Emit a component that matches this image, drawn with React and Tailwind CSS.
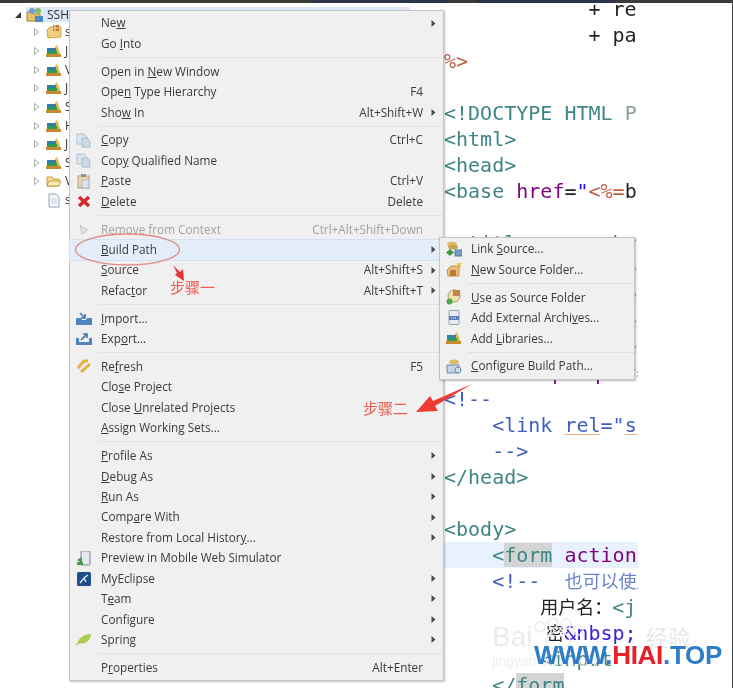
import React from "react";

const SANS = "font-['Open_Sans','Noto_Sans',sans-serif]";
const MONO = "font-['DejaVu_Sans_Mono','Noto_Sans_CJK_SC',monospace]";

// icons
const Lib = () => (
  <svg width="16" height="14" viewBox="0 0 16 14">
    <path d="M9 3 L11 1 L15 12 L9 12 Z" fill="#e8b73a" />
    <rect x="1" y="4" width="9" height="3" fill="#2f7fa8" />
    <rect x="1" y="7" width="10" height="3" fill="#2f9a55" />
    <rect x="0" y="10" width="15" height="3" fill="#c98a2e" />
  </svg>
);
const PkgFolder = () => (
  <svg width="16" height="14" viewBox="0 0 16 14">
    <path d="M1 5 L4 2 L15 2 L15 12 L2 13 Z" fill="#f2cf7c" stroke="#d3a24a" />
    <rect x="7" y="0" width="6" height="6" fill="#b97b3e" />
    <path d="M9 0 V6 M7 3 H13" stroke="#f2dfb4" />
  </svg>
);
const Folder = () => (
  <svg width="16" height="14" viewBox="0 0 16 14">
    <path d="M1 3 L6 3 L7 5 L13 5 L13 12 L1 12 Z" fill="#f7dc95" stroke="#c99a3d" />
    <path d="M3 7 L15 7 L13 12 L1 12 Z" fill="#fbe9b8" stroke="#c99a3d" />
  </svg>
);
const FileIcon = () => (
  <svg width="12" height="15" viewBox="0 0 12 15">
    <path d="M1 1 H8 L11 4 V14 H1 Z" fill="#f4f7fb" stroke="#98a6b8" />
    <path d="M3 6 H9 M3 8 H9 M3 10 H9" stroke="#c3cfdd" />
  </svg>
);
const Project = () => (
  <svg width="18" height="16" viewBox="0 0 18 16">
    <path d="M1 5 L7 5 L8 7 L14 7 L14 14 L1 14 Z" fill="#e8c36a" stroke="#b28a38" />
    <circle cx="6" cy="4" r="3" fill="#6f9fd8" />
    <circle cx="12" cy="4" r="3" fill="#7fbf6a" />
    <rect x="9" y="9" width="8" height="6" fill="#4f87c7" />
  </svg>
);
const CopyIcon = () => (
  <svg width="16" height="15" viewBox="0 0 16 15">
    <path d="M1 1 H8 L11 4 V11 H1 Z" fill="#dbe5ef" stroke="#b3c3d6" />
    <path d="M6 5 H11 L14 8 V14 H6 Z" fill="#cdd9e6" stroke="#a7bad0" />
  </svg>
);
const PasteIcon = () => (
  <svg width="14" height="15" viewBox="0 0 14 15">
    <rect x="1" y="2" width="11" height="12" fill="#e8d5a8" stroke="#b5a47c" />
    <rect x="4" y="0" width="5" height="3" fill="#8a97a8" />
    <rect x="5" y="6" width="7" height="8" fill="#dbe5ef" stroke="#a7bad0" />
  </svg>
);
const DeleteIcon = () => (
  <svg width="14" height="13" viewBox="0 0 14 13">
    <path d="M2 2 L12 11 M12 2 L2 11" stroke="#d9272e" strokeWidth="3.4" />
  </svg>
);
const RemoveIcon = () => (
  <svg width="14" height="13" viewBox="0 0 14 13">
    <path d="M3 2 L11 7 L5 11 Z" fill="#dfdfdf" stroke="#c8c8c8" />
  </svg>
);
const ImportIcon = () => (
  <svg width="16" height="13" viewBox="0 0 16 13">
    <path d="M0 6 H5 L6 8 H10 L11 6 H16 V13 H0 Z" fill="#4f87c0" />
    <path d="M4 1 L9 6 M9 2 V6 H5" stroke="#3d76b3" strokeWidth="1.6" fill="none" />
  </svg>
);
const ExportIcon = () => (
  <svg width="16" height="13" viewBox="0 0 16 13">
    <path d="M0 6 H3 V10 H13 V6 H16 V13 H0 Z" fill="#4f87c0" />
    <path d="M5 8 L11 2 M7 2 H11 V6" stroke="#3d76b3" strokeWidth="1.6" fill="none" />
  </svg>
);
const RefreshIcon = () => (
  <svg width="16" height="15" viewBox="0 0 16 15">
    <path d="M2 9 L8 2 L12 2 M5 13 L14 5" stroke="#e3b23c" strokeWidth="3" fill="none" />
  </svg>
);
const PreviewIcon = () => (
  <svg width="14" height="15" viewBox="0 0 14 15">
    <rect x="4" y="0" width="9" height="14" rx="1" fill="#e3e8ec" stroke="#7b8a96" />
    <path d="M0 9 L5 6 V12 Z" fill="#3d9b4a" />
    <rect x="0" y="11" width="6" height="3" fill="#3d9b4a" />
  </svg>
);
const MyEclipseIcon = () => (
  <svg width="14" height="14" viewBox="0 0 14 14">
    <rect width="14" height="14" rx="1.5" fill="#1f4e8c" />
    <path d="M3 11 L7 6 L11 3 M7 6 L9 10" stroke="#e6eef8" strokeWidth="1.3" fill="none" />
  </svg>
);
const SpringIcon = () => (
  <svg width="16" height="13" viewBox="0 0 16 13">
    <path d="M1 12 C2 5 8 1 15 1 C15 7 9 12 3 10 Z" fill="#a6cf4f" />
    <path d="M0 12 L6 8" stroke="#d9a441" />
  </svg>
);
const LinkSourceIcon = () => (
  <svg width="16" height="16" viewBox="0 0 16 16">
    <ellipse cx="6" cy="3" rx="5" ry="2.5" fill="#dcbc6c" />
    <ellipse cx="7" cy="6" rx="5" ry="2.5" fill="#c9a455" />
    <path d="M4 8 L8 11.5 L4 15 L0 11.5 Z" fill="#3f9a4a" />
    <rect x="9" y="9" width="7" height="6" fill="#7d9cc0" stroke="#5b7fa8" />
  </svg>
);
const NewSourceIcon = () => (
  <svg width="16" height="15" viewBox="0 0 16 15">
    <path d="M1 8 L5 4 H13 V14 H2 Z" fill="#e8be7a" stroke="#c8924a" />
    <rect x="4" y="8" width="6" height="6" fill="#b97b3e" />
    <path d="M11 1 L15 5 M15 1 L11 5" stroke="#e8c23f" strokeWidth="1.6" />
  </svg>
);
const UseSourceIcon = () => (
  <svg width="16" height="16" viewBox="0 0 16 16">
    <circle cx="8" cy="7" r="6" fill="#f0e0b0" stroke="#a8a05a" />
    <rect x="7" y="1" width="7" height="6" fill="#c2854a" />
    <circle cx="3.5" cy="12.5" r="3" fill="#4fa84a" />
  </svg>
);
const ArchiveIcon = () => (
  <svg width="12" height="15" viewBox="0 0 12 15">
    <rect x="1" y="0.5" width="10" height="14" rx="1" fill="#e6ecf2" stroke="#8fa3b8" />
    <rect x="1" y="6" width="10" height="4" fill="#5b7fb0" />
    <path d="M3 8 H9" stroke="#fff" strokeDasharray="1 1" />
  </svg>
);
const ConfigIcon = () => (
  <svg width="16" height="15" viewBox="0 0 16 15">
    <ellipse cx="8" cy="3" rx="5" ry="2.5" fill="#dcbc6c" />
    <path d="M1 6 H13 V14 H1 Z" fill="#c3d4e6" stroke="#6f8db0" />
    <circle cx="12" cy="11" r="3" fill="#cdd9e6" stroke="#6f8db0" />
  </svg>
);

const SubArrow = () => (
  <svg width="5" height="7" viewBox="0 0 5 7" className="opacity-80">
    <path d="M0.5 0 L4.5 3.5 L0.5 7 Z" fill="#222" />
  </svg>
);

// "&" marks the mnemonic letter
function Label({ text }) {
  const i = text.indexOf("&");
  if (i < 0) return <span>{text}</span>;
  return (
    <span>
      {text.slice(0, i)}
      <u className="underline-offset-1">{text[i + 1]}</u>
      {text.slice(i + 2)}
    </span>
  );
}

const menu = [
  { t: "Ne&w", sub: true },
  { t: "Go &Into" },
  "sep",
  { t: "Open in &New Window" },
  { t: "Ope&n Type Hierarchy", k: "F4" },
  { t: "Sho&w In", k: "Alt+Shift+W", sub: true },
  "sep",
  { t: "&Copy", k: "Ctrl+C", icon: <CopyIcon /> },
  { t: "Cop&y Qualified Name", icon: <CopyIcon /> },
  { t: "&Paste", k: "Ctrl+V", icon: <PasteIcon /> },
  { t: "&Delete", k: "Delete", icon: <DeleteIcon /> },
  "sep",
  { t: "Remove from Context", k: "Ctrl+Alt+Shift+Down", icon: <RemoveIcon />, off: true },
  { t: "&Build Path", sub: true, active: true },
  { t: "&Source", k: "Alt+Shift+S", sub: true },
  { t: "Refac&tor", k: "Alt+Shift+T", sub: true },
  "sep",
  { t: "&Import...", icon: <ImportIcon /> },
  { t: "Exp&ort...", icon: <ExportIcon /> },
  "sep",
  { t: "Re&fresh", k: "F5", icon: <RefreshIcon /> },
  { t: "Clo&se Project" },
  { t: "Close &Unrelated Projects" },
  { t: "&Assign Working Sets..." },
  "sep",
  { t: "&Profile As", sub: true },
  { t: "&Debug As", sub: true },
  { t: "&Run As", sub: true },
  { t: "Comp&are With", sub: true },
  { t: "Restore from Local Histor&y...", sub: true },
  { t: "Preview in Mobile Web Simulator", icon: <PreviewIcon /> },
  { t: "MyEclipse", icon: <MyEclipseIcon />, sub: true },
  { t: "T&eam", sub: true },
  { t: "Confi&gure", sub: true },
  { t: "Spring", icon: <SpringIcon />, sub: true },
  "sep",
  { t: "P&roperties", k: "Alt+Enter" },
];

const subMenu = [
  { t: "Link &Source...", icon: <LinkSourceIcon /> },
  { t: "&New Source Folder...", icon: <NewSourceIcon /> },
  "sep",
  { t: "&Use as Source Folder", icon: <UseSourceIcon /> },
  { t: "Add External Archi&ves...", icon: <ArchiveIcon /> },
  { t: "Add &Libraries...", icon: <Lib /> },
  "sep",
  { t: "&Configure Build Path...", icon: <ConfigIcon /> },
];

function Rows({ items }) {
  return items.map((it, i) =>
    it === "sep" ? (
      <div key={i} className="h-[7.4px] flex items-center ml-[28px]">
        <div className="h-px w-full bg-[#e2e2e2]" />
      </div>
    ) : (
      <div
        key={i}
        className={`h-[20.45px] flex items-center ${
          it.active ? "bg-[#e4eefa] outline outline-[#d3e2f3]" : ""
        } ${it.off ? "text-[#a2a2a2]" : "text-[#3a3a3a]"}`}
      >
        <div className="w-[28px] shrink-0 flex items-center justify-center">{it.icon}</div>
        <div className="flex-1 pl-[3px] whitespace-nowrap">
          <Label text={it.t} />
        </div>
        {it.k && <div className="whitespace-nowrap text-right">{it.k}</div>}
        <div className="w-[20px] shrink-0 flex items-center justify-center">
          {it.sub && <SubArrow />}
        </div>
      </div>
    )
  );
}

const treeRows = [
  [<PkgFolder />, "s", true],
  [<Lib />, "J", true],
  [<Lib />, "V", true],
  [<Lib />, "J", true],
  [<Lib />, "S", true],
  [<Lib />, "H", true],
  [<Lib />, "J", true],
  [<Lib />, "S", true],
  [<Folder />, "V", true],
  [<FileIcon />, "s", false],
];

const Tag = ({ children }) => <span className="text-[#3f8585]">{children}</span>;
const Attr = ({ children }) => <span className="text-[#7f007f]">{children}</span>;
const Cmt = ({ children }) => <span className="text-[#3f5fbf]">{children}</span>;
const Wavy = ({ children }) => (
  <span className="underline decoration-1 decoration-[#e8b080] underline-offset-2">{children}</span>
);
const Cjk = ({ children }) => <span className="text-[18px]">{children}</span>;

const Line = ({ children, className = "" }) => (
  <div className={`h-[26px] leading-[26px] whitespace-pre ${className}`}>{children || " "}</div>
);

export default function App() {
  return (
    <div className={`relative w-[733px] h-[688px] bg-white overflow-hidden border-r border-[#444] blur-[0.45px] ${SANS}`}>
      {/* top strip */}
      <div className="relative z-10 h-[3px] bg-[#3b3b3b] flex">
        <div className="ml-[313px] w-[137px] h-[3px] bg-[#2c3547] rounded-b" />
        <div className="ml-[25px] w-[140px] h-[3px] bg-[#2c3547] rounded-b" />
      </div>

      <div className="flex h-[685px]">
        {/* project tree */}
        <div className="w-[444px] shrink-0 pt-[4px] text-[12px] text-[#333]">
          <div className="flex items-center h-[15px] ml-[15px]">
            <svg width="6" height="6" viewBox="0 0 6 6"><path d="M6 0 V6 H0 Z" fill="#333" /></svg>
            <div className="ml-[5px] w-[384px] h-[15px] flex items-center bg-[#dde9f8]">
              <Project />
              <span className="ml-[3px]">SSH</span>
            </div>
          </div>
          <div className="pt-[1px]">
            {treeRows.map(([icon, letter, arrow], i) => (
              <div key={i} className="h-[18.65px] flex items-center pl-[34px]">
                <div className="w-[11px]">
                  {arrow && (
                    <svg width="6" height="8" viewBox="0 0 6 8"><path d="M0.5 0.5 L5 4 L0.5 7.5 Z" fill="#fff" stroke="#a9a9a9" /></svg>
                  )}
                </div>
                <div className="w-[17px] flex justify-center">{icon}</div>
                <span className="ml-[3px]">{letter}</span>
              </div>
            ))}
          </div>
        </div>

        {/* source editor */}
        <div className={`w-[194px] h-[685px] overflow-hidden text-[20px] text-[#222] ${MONO}`}>
          <div className="-mt-[7px]">
            <Line>{"            + re"}</Line>
            <Line>{"            + pa"}</Line>
            <Line className="text-[#bf5f3f]">%&gt;</Line>
            <Line />
            <Line><Tag>&lt;!DOCTYPE HTML</Tag> <span className="text-[#8a9a9a]">P</span></Line>
            <Line><Tag>&lt;html&gt;</Tag></Line>
            <Line><Tag>&lt;head&gt;</Tag></Line>
            <Line><Tag>&lt;base</Tag> <Attr>href</Attr>=<span className="text-[#2a00ff]">"</span><span className="text-[#bf5f3f]">&lt;%=</span>b</Line>
            <Line />
            <Line><Tag>{"  title       href"}</Tag></Line>
            <Line>{"    "}<Tag>&lt;meta</Tag> <Attr>http-equiv="pragma"</Attr></Line>
            <Line>{"    "}<Tag>&lt;meta</Tag> <Attr>http-equiv="cache"</Attr></Line>
            <Line>{"    "}<Tag>&lt;meta</Tag> <Attr>http-equiv="expires"</Attr></Line>
            <Line>{"    "}<Tag>&lt;meta</Tag> <Attr>http-equiv="keywords"</Attr></Line>
            <Line><Attr>&lt;meta http-equiv=</Attr></Line>
            <Line><Cmt>&lt;!--</Cmt></Line>
            <Line>{"    "}<Cmt>&lt;link <Wavy>rel</Wavy>="<Wavy>s</Wavy></Cmt></Line>
            <Line>{"    "}<Cmt>--&gt;</Cmt></Line>
            <Line><Tag>&lt;/head&gt;</Tag></Line>
            <Line />
            <Line><Tag>&lt;body&gt;</Tag></Line>
            <Line className="bg-[#e8f2fe]">
              {"    "}<Tag>&lt;<span className="bg-[#d4d4d4]">form</span></Tag> <Attr>action</Attr>
            </Line>
            <Line>
              {"    "}<Cmt>&lt;!--  </Cmt>
              <span className="text-[18px] text-[#6a84cc]">也可以使用</span>
            </Line>
            <Line>{"        "}<Cjk>用户名：</Cjk><Tag>&lt;j</Tag></Line>
            <Line>{"        "}<span className="ml-[6px]"><Cjk>密</Cjk></span><span className="text-[#3a20d8]">&amp;nbsp;</span></Line>
            <Line>{"        "}<Tag>&lt;input</Tag></Line>
            <Line>{"    "}<Tag>&lt;/<span className="bg-[#d4d4d4]">form</span></Tag></Line>
          </div>
        </div>
      </div>

      {/* main context menu */}
      <div className="absolute left-[69px] top-[10px] w-[375px] h-[671px] pt-[2px] bg-[#f0f0f0] border border-[#c4c4c4] shadow-[1px_1px_2px_rgba(0,0,0,0.25)] text-[11.75px]">
        <Rows items={menu} />
      </div>

      {/* Build Path submenu */}
      <div className="absolute left-[439px] top-[237px] w-[196px] h-[143px] pt-[1px] bg-[#f0f0f0] border border-[#c4c4c4] shadow-[1px_1px_2px_rgba(0,0,0,0.25)] text-[11.75px]">
        <Rows items={subMenu} />
      </div>

      {/* hand drawn notes */}
      <svg className="absolute left-0 top-0" width="733" height="688" viewBox="0 0 733 688">
        <ellipse cx="127.5" cy="249.5" rx="52" ry="15.5" fill="none" stroke="#e28a8a" strokeWidth="1.3" />
        <path d="M173 265 L180 272 L183 269 L184 281 L175 275 L177 273 Z" fill="#e8333a" />
        <path d="M472 384 L433 401 L430 396 L416 412 L438 411 L435 406 Z" fill="#ee3b33" />
        {/* baidu paw */}
        <g fill="none" stroke="#ececec" strokeWidth="1.5">
          <circle cx="540" cy="627" r="5" />
          <circle cx="553" cy="623" r="5" />
          <circle cx="566" cy="624" r="5" />
          <circle cx="578" cy="630" r="5" />
          <ellipse cx="558" cy="641" rx="12" ry="9" />
        </g>
      </svg>
      <div className="absolute left-[170px] top-[277px] text-[15px] leading-[20px] text-[#ee5a50] font-['Noto_Sans_CJK_SC',sans-serif]">步骤一</div>
      <div className="absolute left-[363px] top-[398px] text-[15px] leading-[20px] text-[#ee5a50] font-['Noto_Sans_CJK_SC',sans-serif]">步骤二</div>

      {/* watermarks */}
      <div className="absolute left-[492px] top-[622px] text-[28px] leading-[30px] text-[#ececec] font-['Liberation_Sans',sans-serif]">Bai</div>
      <div className="absolute left-[646px] top-[622px] text-[22px] leading-[28px] text-[#e6e6e6] font-['Noto_Sans_CJK_SC',sans-serif]">经验</div>
      <div className="absolute left-[492px] top-[652px] text-[14px] leading-[18px] text-[#eeeeee] font-['Liberation_Sans',sans-serif]">jingyan.baidu.com</div>
      <div className="absolute left-[534px] top-[640px] text-[26px] leading-[30px] font-bold tracking-[-0.3px] whitespace-nowrap text-[#2f7cc8] font-['Liberation_Sans',sans-serif]">
        WWW.<span className="text-[#e8202a]">HIAI</span>.TOP
      </div>
    </div>
  );
}
